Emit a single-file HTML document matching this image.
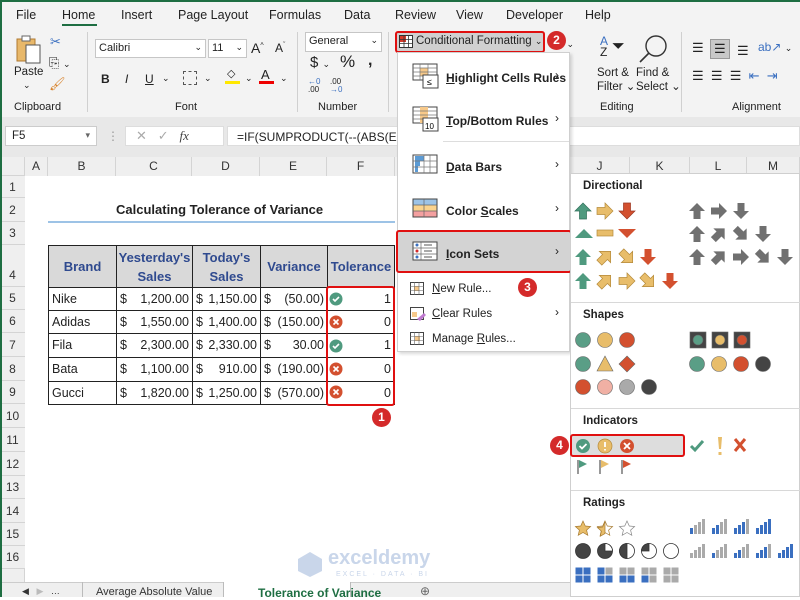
<!DOCTYPE html>
<html><head><meta charset="utf-8"><style>
*{box-sizing:border-box;margin:0;padding:0}
body{width:800px;height:597px;overflow:hidden;position:relative;background:#fff;font-family:"Liberation Sans",sans-serif;font-size:12px;color:#222}
.a{position:absolute}
.t{position:absolute;white-space:nowrap}
.rh{position:absolute;left:0;width:25px;text-align:center;font-size:12px;color:#333;border-bottom:1px solid #d4d4d4;background:#efefef}
.ch{position:absolute;top:157px;height:19px;text-align:center;font-size:12px;line-height:19px;color:#333;border-right:1px solid #d4d4d4;background:#efefef}
.cell{position:absolute;font-size:12.5px;border:1px solid #222;line-height:22px;padding:0 3px}
.hd{background:#d9d9d9;color:#2f4a8f;font-weight:bold;font-size:13px;text-align:center;display:flex;align-items:center;justify-content:center;line-height:19px}
.badge{position:absolute;width:19px;height:19px;border-radius:50%;background:#d42a2a;color:#fff;font-weight:bold;font-size:12px;text-align:center;line-height:19px}
.mi{position:absolute;left:446px;font-size:12px;font-weight:bold;color:#222}
.sec{position:absolute;left:583px;font-weight:bold;font-size:11.5px;color:#222}
.sep{position:absolute;left:571px;width:229px;height:1px;background:#d8d8d8}
</style></head><body>
<div class="a" style="left:0;top:0;width:800px;height:2px;background:#1e6e42"></div>
<div class="a" style="left:0;top:2px;width:800px;height:115px;background:#f3f3f3"></div>
<div class="t" style="left:16px;top:8px;font-size:12.5px">File</div>
<div class="t" style="left:62px;top:8px;font-size:12.5px">Home</div>
<div class="a" style="left:62px;top:24px;width:35px;height:2px;background:#1e6e42"></div>
<div class="t" style="left:121px;top:8px;font-size:12.5px">Insert</div>
<div class="t" style="left:178px;top:8px;font-size:12.5px">Page Layout</div>
<div class="t" style="left:269px;top:8px;font-size:12.5px">Formulas</div>
<div class="t" style="left:344px;top:8px;font-size:12.5px">Data</div>
<div class="t" style="left:395px;top:8px;font-size:12.5px">Review</div>
<div class="t" style="left:456px;top:8px;font-size:12.5px">View</div>
<div class="t" style="left:506px;top:8px;font-size:12.5px">Developer</div>
<div class="t" style="left:585px;top:8px;font-size:12.5px">Help</div>
<!-- clipboard -->
<svg class="a" style="left:16px;top:35px" width="28" height="30"><rect x="1" y="4" width="18" height="22" fill="#e8b86a" stroke="#b07a30"/><rect x="6" y="1" width="8" height="5" fill="#fff" stroke="#666"/><rect x="10" y="10" width="14" height="18" fill="#fff" stroke="#555"/></svg>
<div class="t" style="left:14px;top:66px;font-size:11.5px">Paste</div>
<div class="t" style="left:23px;top:80px;font-size:9px">⌄</div>
<div class="t" style="left:50px;top:34px;font-size:13px;color:#3a6fc0">✂</div>
<div class="t" style="left:49px;top:55px;font-size:13px">⎘ <span style="font-size:9px">⌄</span></div>
<div class="t" style="left:49px;top:76px;font-size:13px;color:#d8822a">🖌</div>
<div class="t" style="left:14px;top:101px;font-size:11px">Clipboard</div>
<div class="a" style="left:87px;top:32px;width:1px;height:80px;background:#d0d0d0"></div>
<!-- font -->
<div class="a" style="left:95px;top:39px;width:111px;height:19px;background:#fff;border:1px solid #c6c6c6;font-size:11px;padding:2px 3px">Calibri<span style="float:right;font-size:9px">⌄</span></div>
<div class="a" style="left:208px;top:39px;width:39px;height:19px;background:#fff;border:1px solid #c6c6c6;font-size:11px;padding:2px 3px">11<span style="float:right;font-size:9px">⌄</span></div>
<div class="t" style="left:251px;top:40px;font-size:14px">A<sup style="font-size:7px">^</sup></div>
<div class="t" style="left:275px;top:41px;font-size:12px">A<sup style="font-size:7px">ˇ</sup></div>
<div class="t" style="left:101px;top:72px;font-size:12px;font-weight:bold">B</div>
<div class="t" style="left:125px;top:72px;font-size:12px;font-style:italic">I</div>
<div class="t" style="left:145px;top:72px;font-size:12px;text-decoration:underline">U</div>
<div class="t" style="left:162px;top:73px;font-size:9px">⌄</div>
<div class="a" style="left:183px;top:71px;width:14px;height:14px;border:1px dashed #555"></div>
<div class="t" style="left:204px;top:73px;font-size:9px">⌄</div>
<div class="a" style="left:225px;top:81px;width:15px;height:3px;background:#ffe800"></div>
<div class="t" style="left:227px;top:67px;font-size:11px">◇</div>
<div class="t" style="left:245px;top:73px;font-size:9px">⌄</div>
<div class="t" style="left:261px;top:67px;font-size:13px">A</div>
<div class="a" style="left:259px;top:81px;width:15px;height:3px;background:#e00"></div>
<div class="t" style="left:280px;top:73px;font-size:9px">⌄</div>
<div class="t" style="left:175px;top:101px;font-size:11px">Font</div>
<div class="a" style="left:297px;top:32px;width:1px;height:80px;background:#d0d0d0"></div>
<!-- number -->
<div class="a" style="left:305px;top:32px;width:77px;height:20px;background:#fff;border:1px solid #c6c6c6;font-size:11px;padding:2px 3px">General<span style="float:right;font-size:9px">⌄</span></div>
<div class="t" style="left:310px;top:54px;font-size:15px">$ <span style="font-size:9px">⌄</span></div>
<div class="t" style="left:340px;top:52px;font-size:17px">%</div>
<div class="t" style="left:368px;top:52px;font-size:16px;font-weight:bold">,</div>
<div class="t" style="left:308px;top:78px;font-size:8px;line-height:8px;color:#3a6fc0">←0<br><span style="color:#222">.00</span></div>
<div class="t" style="left:330px;top:78px;font-size:8px;line-height:8px">.00<br><span style="color:#3a6fc0">→0</span></div>
<div class="t" style="left:318px;top:101px;font-size:11px">Number</div>
<div class="a" style="left:388px;top:32px;width:1px;height:80px;background:#d0d0d0"></div>
<!-- editing -->
<div class="t" style="left:553px;top:34px;font-size:15px">Σ <span style="font-size:9px">⌄</span></div>
<div class="t" style="left:600px;top:36px;font-size:12px;color:#3a6fc0;line-height:11px">A<br><span style="color:#222">Z</span></div>
<div class="t" style="left:612px;top:38px;font-size:16px">⏷</div>
<svg class="a" style="left:637px;top:34px" width="32" height="30"><circle cx="19" cy="12" r="10" fill="none" stroke="#333" stroke-width="1.4"/><line x1="12" y1="19" x2="3" y2="28" stroke="#333" stroke-width="1.6"/></svg>
<div class="t" style="left:597px;top:66px;font-size:11.5px;line-height:14px">Sort &amp;<br>Filter ⌄</div>
<div class="t" style="left:636px;top:66px;font-size:11.5px;line-height:14px">Find &amp;<br>Select ⌄</div>
<div class="t" style="left:600px;top:101px;font-size:11px">Editing</div>
<div class="a" style="left:681px;top:32px;width:1px;height:80px;background:#d0d0d0"></div>
<div class="t" style="left:692px;top:40px;font-size:13px">☰</div>
<div class="a" style="left:710px;top:39px;width:20px;height:20px;background:#c8c8c8;border:1px solid #999"></div>
<div class="t" style="left:714px;top:41px;font-size:13px">☰</div>
<div class="t" style="left:737px;top:43px;font-size:13px">☰</div>
<div class="t" style="left:758px;top:40px;font-size:12px;color:#3a6fc0">ab↗ <span style="font-size:9px;color:#222">⌄</span></div>
<div class="t" style="left:692px;top:68px;font-size:13px">☰ &nbsp;☰ &nbsp;☰ &nbsp;<span style="color:#3a6fc0">⇤</span> &nbsp;<span style="color:#3a6fc0">⇥</span></div>
<div class="t" style="left:732px;top:101px;font-size:11px">Alignment</div>
<!-- formula bar -->
<div class="a" style="left:0;top:117px;width:800px;height:40px;background:#e8e8e8"></div>
<div class="a" style="left:5px;top:126px;width:92px;height:20px;background:#fff;border:1px solid #ccc;font-size:11.5px;padding:3px 6px">F5<span style="float:right;font-size:9px;color:#666">▾</span></div>
<div class="t" style="left:107px;top:129px;color:#999">⋮</div>
<div class="a" style="left:125px;top:126px;width:99px;height:20px;background:#fff;border:1px solid #ddd"></div>
<div class="t" style="left:136px;top:128px;color:#aaa;font-size:13px">✕ &nbsp; ✓ &nbsp; <i style="color:#444;font-family:'Liberation Serif'">fx</i></div>
<div class="a" style="left:227px;top:126px;width:573px;height:20px;background:#fff;border:1px solid #ddd;font-size:12px;padding:3px 9px">=IF(SUMPRODUCT(--(ABS(E5)</div>
<!-- grid -->
<div class="a" style="left:0;top:157px;width:25px;height:19px;background:#efefef;border-right:1px solid #d4d4d4;border-bottom:1px solid #d4d4d4"></div>
<div class="ch" style="left:25px;width:23px">A</div>
<div class="ch" style="left:48px;width:68px">B</div>
<div class="ch" style="left:116px;width:76px">C</div>
<div class="ch" style="left:192px;width:68px">D</div>
<div class="ch" style="left:260px;width:67px">E</div>
<div class="ch" style="left:327px;width:68px">F</div>
<div class="ch" style="left:395px;width:175px"></div>
<div class="ch" style="left:570px;width:60px">J</div>
<div class="ch" style="left:630px;width:60px">K</div>
<div class="ch" style="left:690px;width:57px">L</div>
<div class="ch" style="left:747px;width:53px">M</div>
<div class="a" style="left:0;top:176px;width:25px;height:406px;background:#efefef;border-right:1px solid #d4d4d4"></div>
<div class="rh" style="top:176px;height:22px;line-height:22px">1</div>
<div class="rh" style="top:198px;height:24px;line-height:24px">2</div>
<div class="rh" style="top:222px;height:23px;line-height:23px">3</div>
<div class="rh" style="top:245px;height:42px;line-height:60px">4</div>
<div class="rh" style="top:287px;height:23px;line-height:23px">5</div>
<div class="rh" style="top:310px;height:23px;line-height:23px">6</div>
<div class="rh" style="top:333px;height:24px;line-height:24px">7</div>
<div class="rh" style="top:357px;height:24px;line-height:24px">8</div>
<div class="rh" style="top:381px;height:23px;line-height:23px">9</div>
<div class="rh" style="top:404px;height:24px;line-height:24px">10</div>
<div class="rh" style="top:428px;height:24px;line-height:24px">11</div>
<div class="rh" style="top:452px;height:24px;line-height:24px">12</div>
<div class="rh" style="top:476px;height:23px;line-height:23px">13</div>
<div class="rh" style="top:499px;height:24px;line-height:24px">14</div>
<div class="rh" style="top:523px;height:23px;line-height:23px">15</div>
<div class="rh" style="top:546px;height:23px;line-height:23px">16</div>
<div class="a" style="left:0;top:2px;width:2px;height:595px;background:#1e6e42"></div>
<div class="t" style="left:116px;top:202px;font-size:13px;font-weight:bold">Calculating Tolerance of Variance</div>
<div class="a" style="left:48px;top:221px;width:347px;height:2px;background:#9dc3e6"></div>
<!-- table -->
<div class="cell hd" style="left:48px;top:245px;width:69px;height:43px">Brand</div>
<div class="cell hd" style="left:116px;top:245px;width:77px;height:43px">Yesterday's<br>Sales</div>
<div class="cell hd" style="left:192px;top:245px;width:69px;height:43px">Today's<br>Sales</div>
<div class="cell hd" style="left:260px;top:245px;width:68px;height:43px">Variance</div>
<div class="cell hd" style="left:327px;top:245px;width:68px;height:43px">Tolerance</div>
<div class="cell" style="left:48px;top:287px;width:69px;height:24px">Nike</div>
<div class="cell" style="left:116px;top:287px;width:77px;height:24px">$<span style="float:right">1,200.00</span></div>
<div class="cell" style="left:192px;top:287px;width:69px;height:24px">$<span style="float:right">1,150.00</span></div>
<div class="cell" style="left:260px;top:287px;width:68px;height:24px">$<span style="float:right">(50.00)</span></div>
<div class="cell" style="left:48px;top:310px;width:69px;height:24px">Adidas</div>
<div class="cell" style="left:116px;top:310px;width:77px;height:24px">$<span style="float:right">1,550.00</span></div>
<div class="cell" style="left:192px;top:310px;width:69px;height:24px">$<span style="float:right">1,400.00</span></div>
<div class="cell" style="left:260px;top:310px;width:68px;height:24px">$<span style="float:right">(150.00)</span></div>
<div class="cell" style="left:48px;top:333px;width:69px;height:25px">Fila</div>
<div class="cell" style="left:116px;top:333px;width:77px;height:25px">$<span style="float:right">2,300.00</span></div>
<div class="cell" style="left:192px;top:333px;width:69px;height:25px">$<span style="float:right">2,330.00</span></div>
<div class="cell" style="left:260px;top:333px;width:68px;height:25px">$<span style="float:right">30.00</span></div>
<div class="cell" style="left:48px;top:357px;width:69px;height:25px">Bata</div>
<div class="cell" style="left:116px;top:357px;width:77px;height:25px">$<span style="float:right">1,100.00</span></div>
<div class="cell" style="left:192px;top:357px;width:69px;height:25px">$<span style="float:right">910.00</span></div>
<div class="cell" style="left:260px;top:357px;width:68px;height:25px">$<span style="float:right">(190.00)</span></div>
<div class="cell" style="left:48px;top:381px;width:69px;height:24px">Gucci</div>
<div class="cell" style="left:116px;top:381px;width:77px;height:24px">$<span style="float:right">1,820.00</span></div>
<div class="cell" style="left:192px;top:381px;width:69px;height:24px">$<span style="float:right">1,250.00</span></div>
<div class="cell" style="left:260px;top:381px;width:68px;height:24px">$<span style="float:right">(570.00)</span></div>
<div class="cell" style="left:327px;top:287px;width:68px;height:24px"><span style="float:right">1</span></div>
<div class="cell" style="left:327px;top:310px;width:68px;height:24px"><span style="float:right">0</span></div>
<div class="cell" style="left:327px;top:333px;width:68px;height:25px"><span style="float:right">1</span></div>
<div class="cell" style="left:327px;top:357px;width:68px;height:25px"><span style="float:right">0</span></div>
<div class="cell" style="left:327px;top:381px;width:68px;height:24px"><span style="float:right">0</span></div>
<svg class="a" style="left:328px;top:290px" width="18" height="112">
<g><circle cx="8" cy="9" r="6.5" fill="#4f9a7f"/><path d="M5 9l2 2 4-4" stroke="#fff" stroke-width="1.6" fill="none"/></g>
<g transform="translate(0,23)"><circle cx="8" cy="9" r="6.5" fill="#d3502f"/><path d="M5.5 6.5l5 5M10.5 6.5l-5 5" stroke="#fff" stroke-width="1.6"/></g>
<g transform="translate(0,47)"><circle cx="8" cy="9" r="6.5" fill="#4f9a7f"/><path d="M5 9l2 2 4-4" stroke="#fff" stroke-width="1.6" fill="none"/></g>
<g transform="translate(0,70)"><circle cx="8" cy="9" r="6.5" fill="#d3502f"/><path d="M5.5 6.5l5 5M10.5 6.5l-5 5" stroke="#fff" stroke-width="1.6"/></g>
<g transform="translate(0,93)"><circle cx="8" cy="9" r="6.5" fill="#d3502f"/><path d="M5.5 6.5l5 5M10.5 6.5l-5 5" stroke="#fff" stroke-width="1.6"/></g>
</svg>
<div class="a" style="left:326px;top:286px;width:69px;height:120px;border:2px solid #e01010;border-radius:3px"></div>
<div class="badge" style="left:372px;top:408px">1</div>
<!-- watermark -->
<svg class="a" style="left:296px;top:550px" width="28" height="28"><path d="M14 2 L26 9 L26 21 L14 27 L2 21 L2 9Z" fill="#c9d6ea"/></svg>
<div class="t" style="left:328px;top:547px;font-size:20px;font-weight:bold;color:#c9d6ea">exceldemy</div>
<div class="t" style="left:336px;top:571px;font-size:7px;letter-spacing:2px;color:#c9d6ea">EXCEL · DATA · BI</div>
<!-- sheet tabs -->
<div class="a" style="left:2px;top:582px;width:798px;height:15px;background:#efefef;border-top:1px solid #ccc"></div>
<div class="t" style="left:22px;top:586px;font-size:9px;color:#333">◀ &nbsp; <span style="color:#bbb">▶</span> &nbsp; …</div>
<div class="a" style="left:82px;top:582px;width:1px;height:15px;background:#bbb"></div>
<div class="t" style="left:96px;top:586px;font-size:11px;color:#333">Average Absolute Value</div>
<div class="a" style="left:223px;top:582px;width:128px;height:15px;background:#fff;border-left:1px solid #bbb;border-right:1px solid #bbb"></div>
<div class="t" style="left:258px;top:586px;font-size:12px;font-weight:bold;color:#1e6e42">Tolerance of Variance</div>
<div class="t" style="left:420px;top:584px;font-size:12px;color:#666">⊕</div>
<!-- CF button -->
<div class="a" style="left:395px;top:31px;width:150px;height:22px;background:#d0d0d0;border:2px solid #e01010;border-radius:3px"></div>
<svg class="a" style="left:399px;top:35px" width="14" height="13"><rect x="0.5" y="0.5" width="13" height="12" fill="#fff" stroke="#333"/><rect x="1" y="1" width="6" height="6" fill="#d83b2b"/><path d="M0 4.5h14M0 8.5h14M5 0v13M9.5 0v13" stroke="#333" stroke-width="0.8"/></svg>
<div class="t" style="left:416px;top:35px;font-size:11.5px;color:#222">Conditional Formatting <span style="font-size:9px">⌄</span></div>
<div class="badge" style="left:547px;top:31px">2</div>
<!-- main menu -->
<div class="a" style="left:397px;top:52px;width:173px;height:300px;background:#fff;border:1px solid #cfcfcf;box-shadow:2px 2px 3px rgba(0,0,0,.15)"></div>
<svg class="a" style="left:412px;top:63px" width="30" height="28"><rect x="1" y="1" width="24" height="16" fill="#fff" stroke="#444"/><rect x="8" y="5" width="8" height="8" fill="#f7c98a"/><path d="M1 5h24M1 9h24M1 13h24M8 1v16M16 1v16" stroke="#777" stroke-width="0.7"/><rect x="11" y="12" width="15" height="13" fill="#fff" stroke="#444"/><text x="15" y="22" font-size="9">≤</text></svg>
<div class="mi" style="top:71px"><u>H</u>ighlight Cells Rules</div><div class="t" style="left:555px;top:68px;font-size:12px">›</div>
<svg class="a" style="left:412px;top:106px" width="30" height="28"><rect x="1" y="1" width="24" height="16" fill="#fff" stroke="#444"/><rect x="8" y="1" width="8" height="16" fill="#f7c98a"/><path d="M1 5h24M1 9h24M1 13h24" stroke="#777" stroke-width="0.7"/><rect x="11" y="12" width="15" height="13" fill="#fff" stroke="#444"/><text x="13" y="23" font-size="8">10</text></svg>
<div class="mi" style="top:114px"><u>T</u>op/Bottom Rules</div><div class="t" style="left:555px;top:111px;font-size:12px">›</div>
<div class="a" style="left:443px;top:141px;width:126px;height:1px;background:#ddd"></div>
<svg class="a" style="left:412px;top:154px" width="28" height="22"><rect x="1" y="1" width="24" height="18" fill="#fff" stroke="#444"/><rect x="3" y="2" width="9" height="5" fill="#5b9bd5"/><rect x="3" y="7" width="5" height="5" fill="#5b9bd5"/><rect x="3" y="12" width="3" height="6" fill="#5b9bd5"/><path d="M1 7h24M1 13h24M12 1v18M18 1v18" stroke="#777" stroke-width="0.7"/></svg>
<div class="mi" style="top:160px"><u>D</u>ata Bars</div><div class="t" style="left:555px;top:157px;font-size:12px">›</div>
<svg class="a" style="left:412px;top:198px" width="28" height="22"><rect x="1" y="1" width="24" height="6" fill="#9dc3e6"/><rect x="1" y="7" width="24" height="6" fill="#fbd38d"/><rect x="1" y="13" width="24" height="6" fill="#f4a0a0"/><rect x="1" y="1" width="24" height="18" fill="none" stroke="#444"/><path d="M1 7h24M1 13h24M12 1v18" stroke="#666" stroke-width="0.7"/></svg>
<div class="mi" style="top:204px">Color <u>S</u>cales</div><div class="t" style="left:555px;top:201px;font-size:12px">›</div>
<div class="a" style="left:396px;top:230px;width:176px;height:43px;background:#d3d3d3;border:2px solid #e01010;border-radius:3px"></div>
<svg class="a" style="left:412px;top:241px" width="28" height="22"><rect x="1" y="1" width="24" height="18" fill="#fff" stroke="#444"/><path d="M1 7h24M1 13h24M9 1v18" stroke="#666" stroke-width="0.7"/><circle cx="5" cy="4" r="1.5" fill="#3a6fc0"/><circle cx="5" cy="10" r="1.5" fill="#d42a2a"/><circle cx="5" cy="16" r="1.5" fill="#3a6fc0"/><path d="M12 4h8M12 10h8M12 16h8" stroke="#555"/></svg>
<div class="mi" style="top:247px"><u>I</u>con Sets</div><div class="t" style="left:555px;top:244px;font-size:12px">›</div>
<div class="badge" style="left:518px;top:278px">3</div>
<svg class="a" style="left:410px;top:282px" width="14" height="14"><rect x="0.5" y="0.5" width="13" height="12" fill="#fff" stroke="#444"/><rect x="4" y="4" width="5" height="5" fill="#f7c98a"/><path d="M0 4.5h14M0 8.5h14M4.5 0v13M9 0v13" stroke="#666" stroke-width="0.6"/></svg>
<div class="t" style="left:432px;top:283px;font-size:11.5px"><u>N</u>ew Rule...</div>
<svg class="a" style="left:410px;top:307px" width="16" height="15"><rect x="0.5" y="0.5" width="13" height="12" fill="#fff" stroke="#444"/><rect x="2" y="5" width="5" height="5" fill="#f7c98a"/><path d="M7 12l7-6 2 2-6 6z" fill="#c07ad0"/></svg>
<div class="t" style="left:432px;top:308px;font-size:11.5px"><u>C</u>lear Rules</div><div class="t" style="left:555px;top:305px;font-size:12px">›</div>
<svg class="a" style="left:410px;top:332px" width="16" height="14"><rect x="0.5" y="0.5" width="13" height="12" fill="#fff" stroke="#444"/><rect x="5" y="4" width="5" height="5" fill="#f7c98a"/><path d="M0 4.5h14M0 8.5h14M4.5 0v13M9 0v13" stroke="#666" stroke-width="0.6"/></svg>
<div class="t" style="left:432px;top:333px;font-size:11.5px">Manage <u>R</u>ules...</div>
<!-- submenu -->
<div class="a" style="left:570px;top:173px;width:230px;height:424px;background:#fff;border:1px solid #cfcfcf"></div>
<div class="sec" style="top:180px">Directional</div>
<div class="sep" style="top:302px"></div>
<div class="sec" style="top:309px">Shapes</div>
<div class="sep" style="top:408px"></div>
<div class="sec" style="top:415px">Indicators</div>
<div class="sep" style="top:490px"></div>
<div class="sec" style="top:497px">Ratings</div>
<svg class="a" style="left:570px;top:173px" width="230" height="424">
<defs>
<path id="up" d="M0 -8 L8 0 L3.5 0 L3.5 8 L-3.5 8 L-3.5 0 L-8 0 Z"/>
</defs>
<use href="#up" transform="translate(13,38)" fill="#4f9a7f" stroke="#2e6e58" stroke-width=".7"/>
<use href="#up" transform="translate(35,38) rotate(90)" fill="#e8bd6a" stroke="#b58a3a" stroke-width=".7"/>
<use href="#up" transform="translate(57,38) rotate(180)" fill="#d3502f" stroke="#9a3520" stroke-width=".7"/>
<use href="#up" transform="translate(127,38)" fill="#707070"/>
<use href="#up" transform="translate(149,38) rotate(90)" fill="#707070"/>
<use href="#up" transform="translate(171,38) rotate(180)" fill="#707070"/>
<path d="M5 65 L14 56 L23 65Z" fill="#4f9a7f"/>
<rect x="27" y="57" width="16" height="6" fill="#e8bd6a" stroke="#b58a3a" stroke-width=".7"/>
<path d="M48 56 L66 56 L57 65Z" fill="#d3502f"/>
<use href="#up" transform="translate(127,61)" fill="#707070"/>
<use href="#up" transform="translate(149,61) rotate(45)" fill="#707070"/>
<use href="#up" transform="translate(171,61) rotate(135)" fill="#707070"/>
<use href="#up" transform="translate(193,61) rotate(180)" fill="#707070"/>
<use href="#up" transform="translate(13,84)" fill="#4f9a7f"/>
<use href="#up" transform="translate(35,84) rotate(45)" fill="#e8bd6a" stroke="#b58a3a" stroke-width=".7"/>
<use href="#up" transform="translate(57,84) rotate(135)" fill="#e8bd6a" stroke="#b58a3a" stroke-width=".7"/>
<use href="#up" transform="translate(78,84) rotate(180)" fill="#d3502f"/>
<use href="#up" transform="translate(127,84)" fill="#707070"/>
<use href="#up" transform="translate(149,84) rotate(45)" fill="#707070"/>
<use href="#up" transform="translate(171,84) rotate(90)" fill="#707070"/>
<use href="#up" transform="translate(193,84) rotate(135)" fill="#707070"/>
<use href="#up" transform="translate(215,84) rotate(180)" fill="#707070"/>
<use href="#up" transform="translate(13,108)" fill="#4f9a7f"/>
<use href="#up" transform="translate(35,108) rotate(45)" fill="#e8bd6a" stroke="#b58a3a" stroke-width=".7"/>
<use href="#up" transform="translate(57,108) rotate(90)" fill="#e8bd6a" stroke="#b58a3a" stroke-width=".7"/>
<use href="#up" transform="translate(78,108) rotate(135)" fill="#e8bd6a" stroke="#b58a3a" stroke-width=".7"/>
<use href="#up" transform="translate(100,108) rotate(180)" fill="#d3502f"/>
<g stroke="#666" stroke-width=".6">
<circle cx="13" cy="167" r="7.5" fill="#5a9e86"/><circle cx="35" cy="167" r="7.5" fill="#e8bd6a"/><circle cx="57" cy="167" r="7.5" fill="#d3502f"/>
<rect x="120" y="159" width="16" height="16" fill="#444"/><circle cx="128" cy="167" r="5" fill="#5a9e86"/>
<rect x="142" y="159" width="16" height="16" fill="#444"/><circle cx="150" cy="167" r="5" fill="#e8bd6a"/>
<rect x="164" y="159" width="16" height="16" fill="#444"/><circle cx="172" cy="167" r="5" fill="#d3502f"/>
<circle cx="13" cy="191" r="7.5" fill="#5a9e86"/><path d="M35 183 L43 198 L27 198Z" fill="#e8bd6a"/><path d="M57 183 L65 191 L57 199 L49 191Z" fill="#d3502f"/>
<circle cx="127" cy="191" r="7.5" fill="#5a9e86"/><circle cx="149" cy="191" r="7.5" fill="#e8bd6a"/><circle cx="171" cy="191" r="7.5" fill="#d3502f"/><circle cx="193" cy="191" r="7.5" fill="#444"/>
<circle cx="13" cy="214" r="7.5" fill="#d3502f"/><circle cx="35" cy="214" r="7.5" fill="#f0b0a4"/><circle cx="57" cy="214" r="7.5" fill="#aaa"/><circle cx="79" cy="214" r="7.5" fill="#444"/>
</g>
<rect x="1" y="263" width="113" height="20" fill="#ddd"/>
<circle cx="13" cy="273" r="7" fill="#4f9a7f"/><path d="M9.5 273l2.5 2.5 4.5-4.5" stroke="#fff" stroke-width="1.8" fill="none"/>
<circle cx="35" cy="273" r="7" fill="#e8bd6a" stroke="#b58a3a" stroke-width=".7"/><path d="M35 269v5M35 276v1.5" stroke="#fff" stroke-width="1.8"/>
<circle cx="57" cy="273" r="7" fill="#d3502f"/><path d="M54 270l6 6M60 270l-6 6" stroke="#fff" stroke-width="1.8"/>
<path d="M121 273l4 4 8-9" stroke="#4f9a7f" stroke-width="3" fill="none"/>
<path d="M148 264h4l-1 12h-2z M148.5 279h3v3h-3z" fill="#e8bd6a"/>
<path d="M165 266l10 12M175 266l-10 12" stroke="#d3502f" stroke-width="3"/>
<path d="M8 287v14M30 287v14M52 287v14" stroke="#555" stroke-width="1.2"/>
<path d="M9 287l8 4-8 4z" fill="#4f9a7f"/><path d="M31 287l8 4-8 4z" fill="#e8bd6a"/><path d="M53 287l8 4-8 4z" fill="#d3502f"/>
<g stroke="#a77b30" stroke-width=".7">
<path d="M13 348l2.3 5 5.3.5-4 3.6 1.2 5.2-4.8-2.8-4.8 2.8 1.2-5.2-4-3.6 5.3-.5z" fill="#e8bd6a"/>
<path d="M35 348l2.3 5 5.3.5-4 3.6 1.2 5.2-4.8-2.8-4.8 2.8 1.2-5.2-4-3.6 5.3-.5z" fill="#fff"/>
<path d="M35 348v12.5l-4.8 2.8 1.2-5.2-4-3.6 5.3-.5z" fill="#e8bd6a"/>
<path d="M57 348l2.3 5 5.3.5-4 3.6 1.2 5.2-4.8-2.8-4.8 2.8 1.2-5.2-4-3.6 5.3-.5z" fill="#fff" stroke="#888"/>
</g>
<g stroke="#333" stroke-width=".8">
<circle cx="13" cy="378" r="7.5" fill="#444"/>
<circle cx="35" cy="378" r="7.5" fill="#444"/><path d="M35 378v-7.5a7.5 7.5 0 0 1 7.5 7.5z" fill="#fff"/>
<circle cx="57" cy="378" r="7.5" fill="#fff"/><path d="M57 370.5a7.5 7.5 0 0 0 0 15z" fill="#444"/>
<circle cx="79" cy="378" r="7.5" fill="#fff"/><path d="M79 378v-7.5a7.5 7.5 0 0 0 -7.5 7.5z" fill="#444"/>
<circle cx="101" cy="378" r="7.5" fill="#fff"/>
</g>
<g>
<rect x="120" y="355" width="3" height="6" fill="#3a6fc0"/><rect x="124" y="352" width="3" height="9" fill="#aaa"/><rect x="128" y="349" width="3" height="12" fill="#aaa"/><rect x="132" y="346" width="3" height="15" fill="#aaa"/>
<rect x="142" y="355" width="3" height="6" fill="#3a6fc0"/><rect x="146" y="352" width="3" height="9" fill="#3a6fc0"/><rect x="150" y="349" width="3" height="12" fill="#aaa"/><rect x="154" y="346" width="3" height="15" fill="#aaa"/>
<rect x="164" y="355" width="3" height="6" fill="#3a6fc0"/><rect x="168" y="352" width="3" height="9" fill="#3a6fc0"/><rect x="172" y="349" width="3" height="12" fill="#3a6fc0"/><rect x="176" y="346" width="3" height="15" fill="#aaa"/>
<rect x="186" y="355" width="3" height="6" fill="#3a6fc0"/><rect x="190" y="352" width="3" height="9" fill="#3a6fc0"/><rect x="194" y="349" width="3" height="12" fill="#3a6fc0"/><rect x="198" y="346" width="3" height="15" fill="#3a6fc0"/>
</g>
<g>
<rect x="120" y="380" width="3" height="5" fill="#aaa"/><rect x="124" y="377" width="3" height="8" fill="#aaa"/><rect x="128" y="374" width="3" height="11" fill="#aaa"/><rect x="132" y="371" width="3" height="14" fill="#aaa"/>
<rect x="142" y="380" width="3" height="5" fill="#3a6fc0"/><rect x="146" y="377" width="3" height="8" fill="#aaa"/><rect x="150" y="374" width="3" height="11" fill="#aaa"/><rect x="154" y="371" width="3" height="14" fill="#aaa"/>
<rect x="164" y="380" width="3" height="5" fill="#3a6fc0"/><rect x="168" y="377" width="3" height="8" fill="#3a6fc0"/><rect x="172" y="374" width="3" height="11" fill="#aaa"/><rect x="176" y="371" width="3" height="14" fill="#aaa"/>
<rect x="186" y="380" width="3" height="5" fill="#3a6fc0"/><rect x="190" y="377" width="3" height="8" fill="#3a6fc0"/><rect x="194" y="374" width="3" height="11" fill="#3a6fc0"/><rect x="198" y="371" width="3" height="14" fill="#aaa"/>
<rect x="208" y="380" width="3" height="5" fill="#3a6fc0"/><rect x="212" y="377" width="3" height="8" fill="#3a6fc0"/><rect x="216" y="374" width="3" height="11" fill="#3a6fc0"/><rect x="220" y="371" width="3" height="14" fill="#3a6fc0"/>
</g>
<g stroke="#fff" stroke-width="1">
<rect x="5" y="394" width="16" height="16" fill="#3a6fc0"/>
<rect x="27" y="394" width="16" height="16" fill="#3a6fc0"/><rect x="35" y="394" width="8" height="8" fill="#aaa"/>
<rect x="49" y="394" width="16" height="16" fill="#3a6fc0"/><rect x="49" y="394" width="16" height="8" fill="#aaa"/>
<rect x="71" y="394" width="16" height="16" fill="#aaa"/><rect x="71" y="402" width="8" height="8" fill="#3a6fc0"/>
<rect x="93" y="394" width="16" height="16" fill="#aaa"/>
<path d="M13 394v16M5 402h16M35 394v16M27 402h16M57 394v16M49 402h16M79 394v16M71 402h16M101 394v16M93 402h16"/>
</g>
</svg>
<div class="a" style="left:570px;top:434px;width:115px;height:23px;border:2px solid #e01010;border-radius:3px"></div>
<div class="badge" style="left:550px;top:436px">4</div>
</body></html>
